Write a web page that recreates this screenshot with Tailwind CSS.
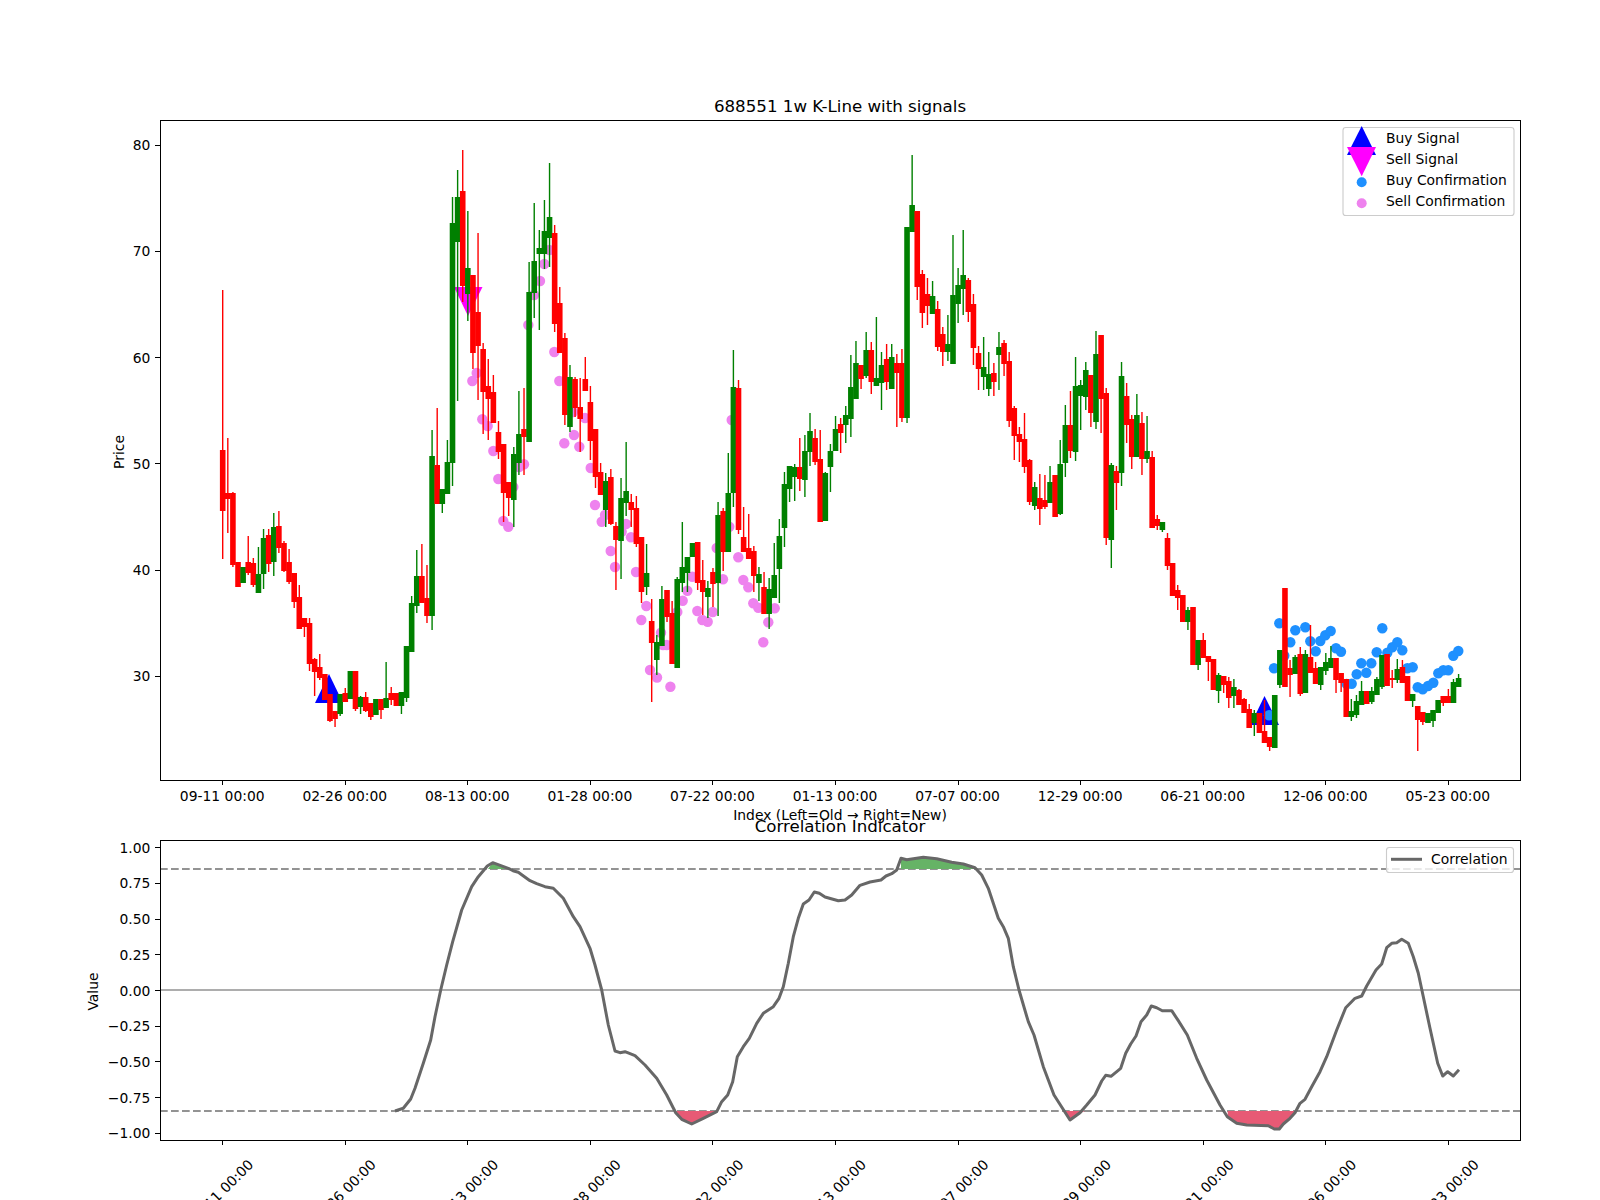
<!DOCTYPE html>
<html lang="en">
<head>
    <meta charset="UTF-8">
    <title>688551 1w K-Line with signals</title>
    <script src="https://cdn.jsdelivr.net/npm/@tailwindcss/browser@4"></script>
</head>
<body class="bg-white">
    <div class="w-[1600px] h-[1200px] overflow-hidden flex flex-col bg-white font-['DejaVu_Sans',sans-serif] text-[13.89px] text-black">
        <!-- K-line panel -->
        <svg id="price" class="block overflow-visible fill-black" width="1600" height="780" viewBox="0 0 1600 780">
            <g id="triangles">
                <polygon points="329,674 315,703 343,703" fill="#0000ff"/>
                <polygon points="1264.5,696 1250.5,725 1279,725" fill="#0000ff"/>
                <polygon points="454,287 482.5,287 468,316" fill="#ff00ff"/>
            </g>
            <g id="dots"></g>
            <g id="candles"></g>
            <rect x="160.5" y="120.5" width="1360" height="660" fill="none" stroke="#000" stroke-width="1"/>
            <g id="price-ticks"></g>
            <text x="840" y="112" text-anchor="middle" class="text-[16.67px]">688551 1w K-Line with signals</text>
            <text x="840" y="820" text-anchor="middle">Index (Left=Old → Right=New)</text>
            <text transform="translate(124,452) rotate(-90)" text-anchor="middle">Price</text>

            <rect x="1343" y="127.5" width="171" height="88" rx="2.8" fill="#fff" fill-opacity="0.8" stroke="#ccc" stroke-width="1.11"/>
            <polygon points="1361.7,126 1347,155 1376,155" fill="#0000ff"/>
            <polygon points="1347,147 1376,147 1361.7,176.3" fill="#ff00ff"/>
            <circle cx="1361.7" cy="182.3" r="5" fill="#1e90ff"/>
            <circle cx="1361.7" cy="203.3" r="5" fill="#ee82ee"/>
            <text x="1386" y="143.3">Buy Signal</text>
            <text x="1386" y="164.3">Sell Signal</text>
            <text x="1386" y="185.3">Buy Confirmation</text>
            <text x="1386" y="206.3">Sell Confirmation</text>
        </svg>

        <!-- Correlation panel -->
        <svg id="corr" class="block fill-black" width="1600" height="420" viewBox="0 780 1600 420">
            <line x1="160" y1="990" x2="1520" y2="990" stroke="#adadad" stroke-width="2"/>
            <line x1="160" y1="869" x2="1520" y2="869" stroke="#939393" stroke-width="2" stroke-dasharray="7.7 3.3"/>
            <line x1="160" y1="1111" x2="1520" y2="1111" stroke="#939393" stroke-width="2" stroke-dasharray="7.7 3.3"/>
            <polygon points="488,869 492.7,862.7 503,866.6 505,869" fill="#66b366"/>
            <polygon points="901,869 901,858.3 906.7,859.7 923.3,857.3 936.7,858.7 951.7,862.3 963.3,864 975,867.7 976.5,869" fill="#66b366"/>
            <polygon points="676,1111 681.7,1119.3 691.7,1124 703.3,1118.3 716.7,1111.7 717,1111" fill="#e75a75"/>
            <polygon points="1065,1111 1070,1120 1080,1113.3 1085,1111" fill="#e75a75"/>
            <polygon points="1227.7,1111 1227.7,1116.7 1236.7,1123.3 1246.7,1125 1268.3,1125.7 1274.3,1129 1279.3,1129 1283.3,1124 1290,1118.3 1295,1112.7 1296,1111" fill="#e75a75"/>
            <polyline id="corr-line" fill="none" stroke="#676767" stroke-width="3" stroke-linejoin="round" points=""/>
            <rect x="160.5" y="840.5" width="1360" height="300" fill="none" stroke="#000" stroke-width="1"/>
            <g id="corr-ticks"></g>
            <text x="840" y="831.7" text-anchor="middle" class="text-[16.67px]">Correlation Indicator</text>
            <text transform="translate(98,991.5) rotate(-90)" text-anchor="middle">Value</text>

            <rect x="1386.5" y="847.5" width="127" height="25" rx="2.8" fill="#fff" fill-opacity="0.8" stroke="#ccc" stroke-width="1.11"/>
            <line x1="1391" y1="859.3" x2="1422" y2="859.3" stroke="#676767" stroke-width="3"/>
            <text x="1431" y="864">Correlation</text>
        </svg>
    </div>

    <script>
        const NS = 'http://www.w3.org/2000/svg';
        function add(parent, tag, attrs, text) {
            const el = document.createElementNS(NS, tag);
            for (const k in attrs) el.setAttribute(k, attrs[k]);
            if (text) el.textContent = text;
            parent.appendChild(el);
            return el;
        }

        const tickX = i => 222.7 + 122.56 * i;
        const candleX = i => 222.7 + 5.107 * i;
        const snap = v => Math.floor(v) + 0.5;
        const dates = ['09-11 00:00', '02-26 00:00', '08-13 00:00', '01-28 00:00', '07-22 00:00', '01-13 00:00', '07-07 00:00', '12-29 00:00', '06-21 00:00', '12-06 00:00', '05-23 00:00'];

        // [colour, body top, body bottom, wick top, wick bottom] in picture pixels, old to new
        const candles = [
            'R 450 511 290 559','R 493 499 438 533','R 493 565 492 567','R 562 587','G 567 583','R 562 573 536 575','R 563 585 558 587','G 574 593 547 593',
            'G 538 574 529 589','R 535 564 529 572','G 527 562 513 576','R 526 548 511 553','R 543 571 541 572','R 562 582 549 584','R 573 602 573 608','R 597 629 585 629',
            'R 618 627 618 637','R 623 664 618 671','R 659 672 658 696','R 667 678 654 680','R 674 700','R 694 721 694 722','R 711 719 711 727','G 694 714 694 716',
            'R 693 702 688 702','G 671 699','R 671 709 671 711','G 697 707 696 714','R 697 711 692 712','R 703 717 703 720','G 699 715','R 699 710 699 719',
            'G 698 708 662 708','R 693 700 687 705','R 693 706','G 692 706 692 714','G 646 698 646 702','G 603 652 596 652','G 576 606 550 613','R 576 603 544 603',
            'R 598 616 565 623','G 456 616 430 630','R 465 504 408 504','G 489 504 489 513','G 462 494 440 494','G 223 463 197 486','G 197 242 170 401','R 191 286 150 302',
            'G 268 294 211 321','R 275 353 275 369','R 312 346 233 400','R 349 392 343 434','R 386 399 359 440','R 392 423 375 423','R 432 452 421 459','R 444 493 444 522',
            'R 482 498 482 516','G 454 500 447 527','G 434 463 391 475','R 429 437 388 475','G 292 442 262 442','G 261 293 203 318','G 248 254 230 330','G 231 254 200 269',
            'G 217 238 163 267','R 233 324 225 332','R 303 353 287 353','R 338 415 333 425','G 377 427 365 432','R 379 408 377 417','R 407 419 378 452','R 379 391 357 391',
            'R 402 441 386 460','R 429 477 429 488','R 472 495 463 495','G 481 510 473 527','R 477 524 469 525','R 526 540 522 590','G 498 541 478 579','G 491 503 442 516',
            'R 502 510 494 527','R 508 544 496 547','R 537 592 537 603','G 573 587 544 595','R 621 643 599 702','G 642 660 635 675','G 599 646 586 646','R 590 617 590 622',
            'R 613 664 601 664','G 579 668 577 668','G 567 583 522 592','G 557 573 557 592','G 543 557','R 542 583 542 590','R 580 592 560 615','G 588 597 581 618',
            'R 572 584 568 607','G 515 583 502 616','R 511 552 508 571','G 493 552 453 552','G 387 493 350 507','R 388 530 380 534','R 537 552 507 552','R 548 559 514 559',
            'R 551 576 546 592','G 574 583 567 601','R 587 614 572 614','G 589 614 578 629','G 575 598 543 598','G 536 569 519 603','G 484 528 472 547','G 466 489 466 502',
            'G 467 477 464 501','R 467 479 438 491','G 451 480 435 497','G 431 452 413 466','R 438 462 429 465','R 459 522 430 522','G 473 521 472 521','G 451 467 444 492',
            'G 429 451 416 451','R 424 433 418 453','G 415 425 406 443','G 387 419 355 437','G 363 399 341 399','R 365 379 365 389','G 350 376 332 378','R 350 382 342 394',
            'G 378 386 317 386','G 365 383 352 410','R 359 382 344 390','G 357 389 344 389','R 363 373 354 427','R 363 418 349 422','G 227 418 227 423','G 205 232 155 232',
            'R 211 287 211 300','R 274 313 270 328','R 294 306 278 325','G 296 314 281 314','R 309 347 301 351','R 334 352 327 366','G 344 352 315 361','G 295 364 235 364',
            'G 285 304 268 323','G 275 289 230 315','R 280 312 278 322','R 304 348 294 365','R 353 369 346 390','G 367 377 337 390','G 374 389 352 396','R 373 382 363 396',
            'G 347 355 332 390','R 343 364 340 376','R 361 421 352 427','R 408 436 406 460','R 434 442 427 462','R 439 467 413 473','R 460 502 459 505','G 487 506 482 510',
            'R 498 509 474 525','R 500 507 475 509','G 482 503 466 503','R 475 517','G 464 514 440 515','G 425 463 405 477','R 425 451 391 458','G 386 452 357 461',
            'G 385 396 380 430','G 370 397 362 410','R 375 413 375 427','G 354 422 331 429','R 335 399 335 433','R 393 538 388 545','G 465 540 463 568','R 471 483 466 510',
            'G 376 473 362 486','R 396 425 383 443','R 419 457 415 469','G 415 457 394 457','R 423 459 412 475','G 451 459 416 463','R 457 528 451 528','R 519 526 515 530',
            'G 522 530 522 532','R 538 566 533 570','R 563 596','R 590 598 585 610','R 595 622','G 610 622 607 630','R 607 665','G 640 665 640 670',
            'R 640 658 633 658','R 656 662 656 681','R 659 690 659 690','G 675 691 673 703','R 676 685 676 693','R 681 698 677 708','G 687 696 679 708','R 690 705 689 705',
            'R 699 713 698 713','R 709 728 704 728','G 713 723 710 736','R 713 733','R 731 743 700 743','R 737 747 737 751','G 695 748','G 650 685 650 688',
            'R 588 687','R 668 675 660 697','G 657 674 655 674','R 654 694 647 696','G 654 693 650 693','R 657 673 625 673','R 668 684 662 684','G 667 685 667 690',
            'G 662 671 653 675','G 658 668 646 668','R 658 680 658 693','R 673 683 673 692','R 679 717','G 711 717 699 721','G 701 715 695 718','G 691 705 681 705',
            'R 691 704','G 691 702 687 704','G 679 695 677 695','G 655 687 655 689','R 654 686','R 678 680 670 688','G 669 680 659 683','R 667 683 660 683',
            'R 676 701','G 694 701 694 707','R 706 720 706 751','R 712 722 712 725','G 713 723','G 710 721 710 727','G 700 713','R 696 703 696 706',
            'R 696 703 689 703','G 682 703 679 703','G 678 687 674 687'
        ];

        const pink = [[472.3,381],[476.7,373],[482.3,419.3],[487.7,426],[493.3,451],[498.3,479],[503.3,521],[508.3,526.7],[513.3,487],[519,467],[524,464.3],
            [528.3,325],[534,295],[540,281],[544.3,264],[549.3,250],[554.3,352],[559.3,381],[564.3,443.3],[573,412],[574,435],[579.3,446.7],[585,418],[590.7,468],[595,505],
            [601.7,521.7],[605,515],[610.7,551],[615,567],[621.7,531.7],[626,524],[631,537.3],[636,572],[641.3,620],[646.3,606],[650,670],[657,677.5],[661,632.7],[663,645],[666.7,645],[670.4,686.7],
            [677.3,612],[682.7,600.7],[687.3,590.7],[692.3,576.7],[697.3,611],[702.3,620],[707.7,621.7],[712.7,612],[716.7,548],[723,579.3],[729.3,526.7],[731.7,420],[738.3,557.3],[743.3,580],
            [748.3,587.3],[753.3,603.3],[758.3,607.7],[763.3,642.3],[768.3,622.3],[774.7,608.3]];
        const blue = [[1269,715.3],[1274,668.3],[1279.3,623.3],[1284.3,655.7],[1290.3,642.3],[1295.3,630.3],[1305.3,627.3],[1310.3,641.3],[1315.7,651.3],[1320.3,641],[1325.3,635.3],[1330.7,631],
            [1336,648.3],[1341,651.7],[1346.7,684],[1351.7,683.7],[1356.7,674.3],[1361.3,663.3],[1366.3,672.7],[1371.3,663.3],[1376.7,652.3],[1382.3,628.3],[1387.3,652.7],[1392.3,647.3],[1397.3,642.3],
            [1402.3,650.3],[1407.3,668.3],[1412.7,667.3],[1417.7,687.3],[1422.7,689.3],[1428,686],[1433.3,682.7],[1438.3,673.3],[1443.3,670.3],[1448.3,670.3],[1453.3,655.7],[1458.3,651]];

        const corr = [395,1111,403.3,1108.3,410.7,1099,415,1088.3,423.3,1063.3,430.7,1040,435,1016.7,440.7,990,446.7,965,452.7,941.7,461.7,910,471.7,886.7,478.3,876.7,487.3,866,492.7,862.7,508.3,868.3,513,870.7,518.3,872.3,530,880.7,536.7,883.7,545,886.7,553.3,888.3,563.3,898.3,573.3,916.7,580,926.7,590,948.3,595,965,601.7,990,608.3,1025,615,1051,620,1052.7,625,1051.7,635,1055.7,645,1065,656.7,1078.3,666.7,1095,675.7,1112.7,681.7,1119.3,691.7,1124,703.3,1118.3,716.7,1111.7,721.7,1101.7,727.7,1095,732.7,1081.7,737.3,1056.7,743.3,1046.7,749.3,1038.3,756.7,1023.3,763.3,1013.3,773.3,1006.7,779,998.3,783.3,986.7,788.3,963.3,793.3,936.7,798.3,918.3,803.3,904,809,900,814.3,892,819.3,893.3,825,897,838.3,900.7,845,900,851.7,895,860,885.3,870,882,881,880,886,876,891.7,873.7,896.7,870,901,858.3,906.7,859.7,923.3,857.3,936.7,858.7,951.7,862.3,963.3,864,975,867.7,981.7,875,988.3,888.3,998.3,918.3,1003.3,926.7,1008.3,938.3,1013.3,966.7,1019,990,1028.3,1021.7,1034,1035,1043.3,1066.7,1054,1095,1070,1120,1080,1112.7,1086.7,1105,1095,1095,1101.7,1081,1105.7,1075.3,1111,1076.3,1120.7,1068.3,1125.7,1053.3,1130.7,1044,1136,1036,1141,1021.7,1146.7,1015,1151.3,1006,1156.7,1007.7,1162.3,1010.7,1171.7,1010.7,1178.3,1020.7,1187.3,1035,1196.7,1058.3,1206.7,1080,1220,1105,1227.3,1116.7,1236.7,1123.3,1246.7,1125,1268.3,1125.7,1274.3,1129,1279.3,1129,1283.3,1124,1290,1118.3,1295,1112.7,1300,1103.3,1305,1099.3,1311.7,1086.7,1320,1071.7,1326.7,1056.7,1336.7,1030,1345.7,1007.7,1355,998.3,1361.7,996,1366.7,986,1376,970,1381.7,964,1386.7,947.7,1391.7,943.3,1396.7,942.7,1401.7,939.3,1408.3,943.3,1413.3,956.7,1418.3,973.3,1423.3,996.7,1430,1028.3,1437.7,1063.3,1442.7,1076,1447.7,1071.7,1453.3,1076,1459,1069.7];

        const dots = document.getElementById('dots');
        pink.forEach(p => add(dots, 'circle', {cx: p[0], cy: p[1], r: 5.2, fill: '#ee82ee'}));
        blue.forEach(p => add(dots, 'circle', {cx: p[0], cy: p[1], r: 5.2, fill: '#1e90ff'}));

        const group = document.getElementById('candles');
        candles.forEach((row, i) => {
            const parts = row.split(' ');
            const fill = parts[0] === 'R' ? '#ff0000' : '#008000';
            const top = +parts[1], bottom = +parts[2];
            const wickTop = parts.length > 3 ? +parts[3] : top;
            const wickBottom = parts.length > 4 ? +parts[4] : bottom;
            const x = candleX(i);
            add(group, 'rect', {x: x - 0.7, y: wickTop, width: 1.4, height: wickBottom - wickTop, fill});
            add(group, 'rect', {x: x - 2.8, y: top, width: 5.6, height: bottom - top, fill});
        });

        document.getElementById('corr-line').setAttribute('points', corr.join(' '));

        // ticks and labels for both panels
        const priceTicks = document.getElementById('price-ticks');
        const corrTicks = document.getElementById('corr-ticks');
        dates.forEach((d, i) => {
            const x = tickX(i);
            add(priceTicks, 'line', {x1: snap(x), y1: 781, x2: snap(x), y2: 785, stroke: '#000', 'stroke-width': 1});
            add(priceTicks, 'text', {x: x - 0.5, y: 801, 'text-anchor': 'middle'}, d);
            add(corrTicks, 'line', {x1: snap(x), y1: 1141, x2: snap(x), y2: 1145, stroke: '#000', 'stroke-width': 1});
            add(corrTicks, 'text', {transform: `translate(${x - 2},1192) rotate(-45)`, 'text-anchor': 'middle', 'dominant-baseline': 'central'}, d);
        });
        [[80, 145], [70, 251.3], [60, 357.5], [50, 463.7], [40, 570], [30, 676]].forEach(t => {
            add(priceTicks, 'line', {x1: 155, y1: snap(t[1]), x2: 160, y2: snap(t[1]), stroke: '#000', 'stroke-width': 1});
            add(priceTicks, 'text', {x: 150.3, y: t[1] + 5, 'text-anchor': 'end'}, String(t[0]));
        });
        ['1.00', '0.75', '0.50', '0.25', '0.00', '−0.25', '−0.50', '−0.75', '−1.00'].forEach((label, i) => {
            const y = 847.7 + 35.7 * i;
            add(corrTicks, 'line', {x1: 155, y1: snap(y), x2: 160, y2: snap(y), stroke: '#000', 'stroke-width': 1});
            add(corrTicks, 'text', {x: 150.3, y: y + 5, 'text-anchor': 'end'}, label);
        });
    </script>
</body>
</html>
